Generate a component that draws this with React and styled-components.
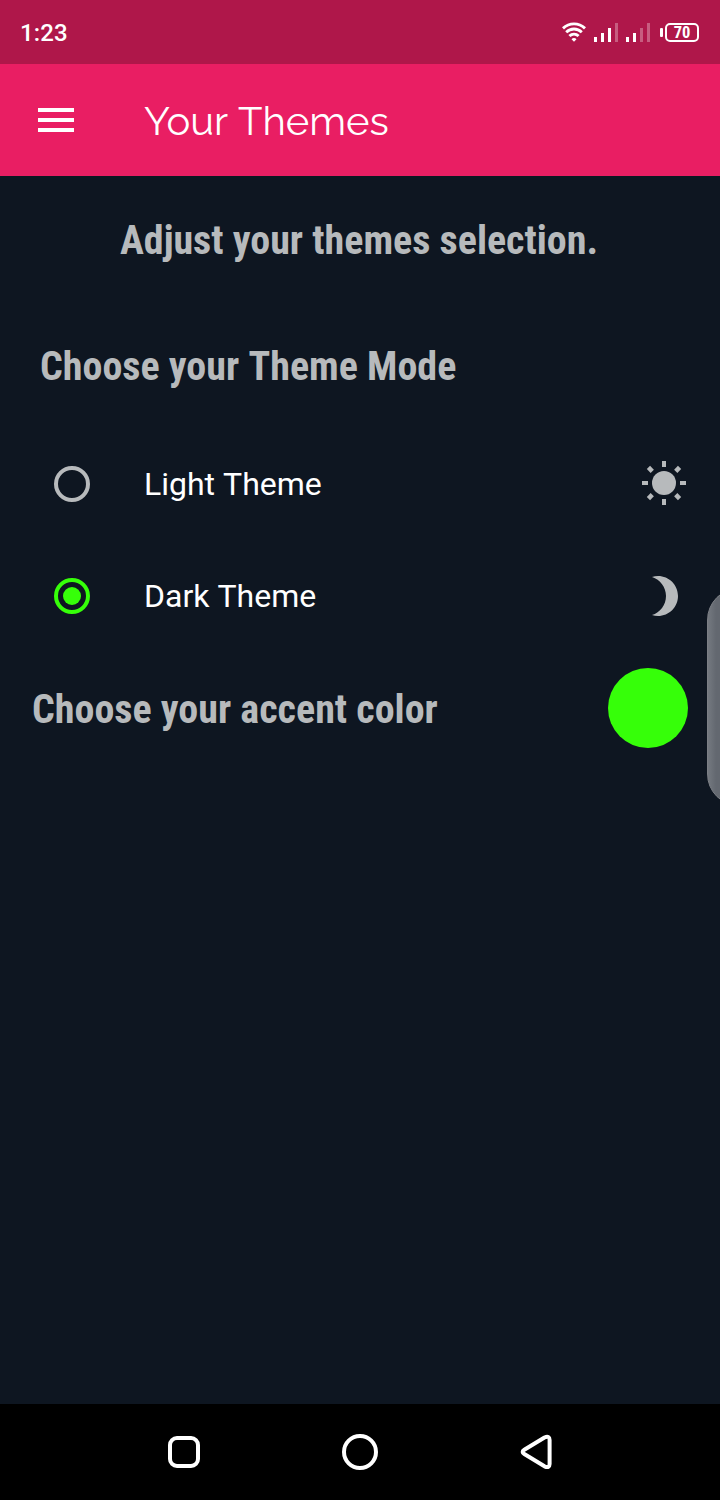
import React from "react";
import styled, { createGlobalStyle } from "styled-components";

const GlobalStyle = createGlobalStyle`
  * { box-sizing: border-box; }
  body { margin: 0; background: #0e1621; font-family: Roboto, sans-serif; }
`;

const Screen = styled.div`
  position: relative;
  display: flex;
  flex-direction: column;
  width: 720px;
  height: 1500px;
  overflow: hidden;
  background: #0e1621;
`;

const StatusBar = styled.div`
  display: flex;
  align-items: center;
  justify-content: space-between;
  height: 64px;
  padding: 0 21px 0 20px;
  background: #af174a;
  color: #fff;
`;

const Clock = styled.span`
  font-size: 24px;
  font-weight: 500;
  line-height: 28px;
  padding-top: 2px;
  letter-spacing: 0.1px;
`;

const StatusIcons = styled.div`
  display: flex;
  align-items: center;
  gap: 8px;
`;

const SignalBars = styled.div`
  display: flex;
  align-items: flex-end;
  gap: 4px;
  height: 19px;
`;

const Bar = styled.span`
  width: 3px;
  height: ${(p) => p.$height}px;
  background: ${(p) => (p.$dim ? "rgba(255,255,255,0.3)" : "#fff")};
`;

const Battery = styled.div`
  display: flex;
  align-items: center;
  gap: 2px;
  margin-left: 2px;
`;

const BatteryCap = styled.span`
  width: 3px;
  height: 9px;
  border-radius: 1px;
  background: #fff;
`;

const BatteryBody = styled.span`
  display: flex;
  align-items: center;
  justify-content: center;
  width: 34px;
  height: 19px;
  border: 2px solid #fff;
  border-radius: 5px;
  font: 700 16.5px/19px "Roboto Condensed", Roboto, sans-serif;
`;

const AppBar = styled.header`
  display: flex;
  align-items: center;
  height: 112px;
  padding-left: 38px;
  background: #e91e63;
`;

const MenuButton = styled.button`
  display: flex;
  flex-direction: column;
  gap: 6px;
  width: 36px;
  padding: 0;
  border: 0;
  background: none;
`;

const MenuLine = styled.span`
  height: 4px;
  background: #fff;
`;

const Title = styled.h1`
  margin: 0 0 0 70px;
  color: #fff;
  font: 400 40px/47px Raleway, sans-serif;
  word-spacing: 2px;
`;

const Content = styled.main`
  flex: 1;
  padding-top: 41px;
`;

const Heading = styled.h2`
  margin: 0;
  color: #b7babc;
  font: 700 40px/47px "Roboto Condensed", Roboto, sans-serif;
  white-space: nowrap;
`;

const Intro = styled(Heading)`
  text-align: center;
  padding-right: 2px;
`;

const ModeHeading = styled(Heading)`
  margin: 79px 0 38px 40px;
`;

const Nudge = styled.span`
  margin-left: 0.2px;
`;

const Option = styled.label`
  display: flex;
  align-items: center;
  height: 112px;
  padding: 0 32px 0 54px;
`;

const Radio = styled.span`
  display: grid;
  place-items: center;
  width: 36px;
  height: 36px;
  border: 4px solid ${(p) => (p.$checked ? "#36ff09" : "#b7babc")};
  border-radius: 50%;
`;

const RadioDot = styled.span`
  width: 18px;
  height: 18px;
  border-radius: 50%;
  background: #36ff09;
`;

const OptionLabel = styled.span`
  flex: 1;
  margin-left: 54px;
  color: #fff;
  font-size: 32px;
  line-height: 38px;
  word-spacing: 0.7px;
`;

const AccentRow = styled.div`
  display: flex;
  align-items: center;
  justify-content: space-between;
  height: 80px;
  margin-top: 16px;
  padding: 0 32px;
`;

const AccentHeading = styled(Heading)`
  padding-top: 2px;
`;

const Swatch = styled.span`
  width: 80px;
  height: 80px;
  border-radius: 50%;
  background: #36ff09;
`;

const EdgeHandle = styled.div`
  position: absolute;
  top: 588px;
  right: -51px;
  width: 64px;
  height: 218px;
  border: 1px solid #7c7f85;
  border-radius: 32px;
  background: linear-gradient(90deg, #747980 0, #636870 8px, #636870 100%);
`;

const NavBar = styled.nav`
  display: flex;
  align-items: center;
  justify-content: space-between;
  height: 96px;
  padding: 0 164px;
  background: #000;
`;

const NavIcon = styled.svg`
  width: 40px;
  height: 40px;
  fill: none;
  stroke: #fff;
  stroke-width: 4;
  stroke-linejoin: round;
`;

function Wifi() {
  return (
    <svg width="24" height="20" viewBox="0 0 24 20" fill="none" stroke="#fff" strokeWidth="2.9">
      <path d="M1 6.4C7.3.3 16.7.3 23 6.4" />
      <path d="M4.2 10.2C8.7 6 15.3 6 19.8 10.2" />
      <path d="M7.4 14C10.1 11.5 13.9 11.5 16.6 14" />
      <path d="M12 19.8 9.5 17.3C11 15.7 13 15.7 14.5 17.3Z" fill="#fff" stroke="none" />
    </svg>
  );
}

function Signal({ level }) {
  return (
    <SignalBars>
      {[5, 9, 14, 19].map((h, i) => (
        <Bar key={h} $height={h} $dim={i >= level} />
      ))}
    </SignalBars>
  );
}

function Sun() {
  return (
    <svg width="48" height="48" viewBox="0 0 48 48" fill="#b7babc">
      <circle cx="24" cy="23" r="12" />
      {[0, 90, 180, 270].map((a) => (
        <rect key={a} x="22" y="1" width="4" height="6" transform={`rotate(${a} 24 23)`} />
      ))}
      {[45, 135, 225, 315].map((a) => (
        <rect key={a} x="21.7" y="1" width="4.6" height="5.4" transform={`rotate(${a} 24 23)`} />
      ))}
    </svg>
  );
}

function Moon() {
  return (
    <svg width="48" height="48" viewBox="0 0 24 24" fill="#b7babc">
      <path d="M9 2c-1.05 0-2.05.16-3 .46 4.06 1.27 7 5.06 7 9.54s-2.94 8.27-7 9.54c.95.3 1.95.46 3 .46 5.52 0 10-4.48 10-10S14.52 2 9 2z" />
    </svg>
  );
}

export default function App() {
  return (
    <>
      <GlobalStyle />
      <Screen>
        <StatusBar>
          <Clock>1:23</Clock>
          <StatusIcons>
            <Wifi />
            <Signal level={3} />
            <Signal level={2} />
            <Battery>
              <BatteryCap />
              <BatteryBody>70</BatteryBody>
            </Battery>
          </StatusIcons>
        </StatusBar>
        <AppBar>
          <MenuButton aria-label="Menu">
            <MenuLine />
            <MenuLine />
            <MenuLine />
          </MenuButton>
          <Title>Your Themes</Title>
        </AppBar>
        <Content>
          <Intro>Adjust your themes selection.</Intro>
          <ModeHeading>
            Choose your <Nudge>Theme Mode</Nudge>
          </ModeHeading>
          <Option>
            <Radio />
            <OptionLabel>Light Theme</OptionLabel>
            <Sun />
          </Option>
          <Option>
            <Radio $checked>
              <RadioDot />
            </Radio>
            <OptionLabel>Dark Theme</OptionLabel>
            <Moon />
          </Option>
          <AccentRow>
            <AccentHeading>Choose your accent color</AccentHeading>
            <Swatch />
          </AccentRow>
        </Content>
        <NavBar>
          <NavIcon viewBox="0 0 40 40">
            <rect x="6" y="6" width="28" height="28" rx="7" />
          </NavIcon>
          <NavIcon viewBox="0 0 40 40">
            <circle cx="20" cy="20" r="16" />
          </NavIcon>
          <NavIcon viewBox="0 0 40 40">
            <path d="M8.3 17.8 28.5 5.5Q33.6 3.3 33.6 8V32Q33.6 36.5 28.5 34.3L8.3 22Q5 19.9 8.3 17.8Z" />
          </NavIcon>
        </NavBar>
        <EdgeHandle />
      </Screen>
    </>
  );
}
